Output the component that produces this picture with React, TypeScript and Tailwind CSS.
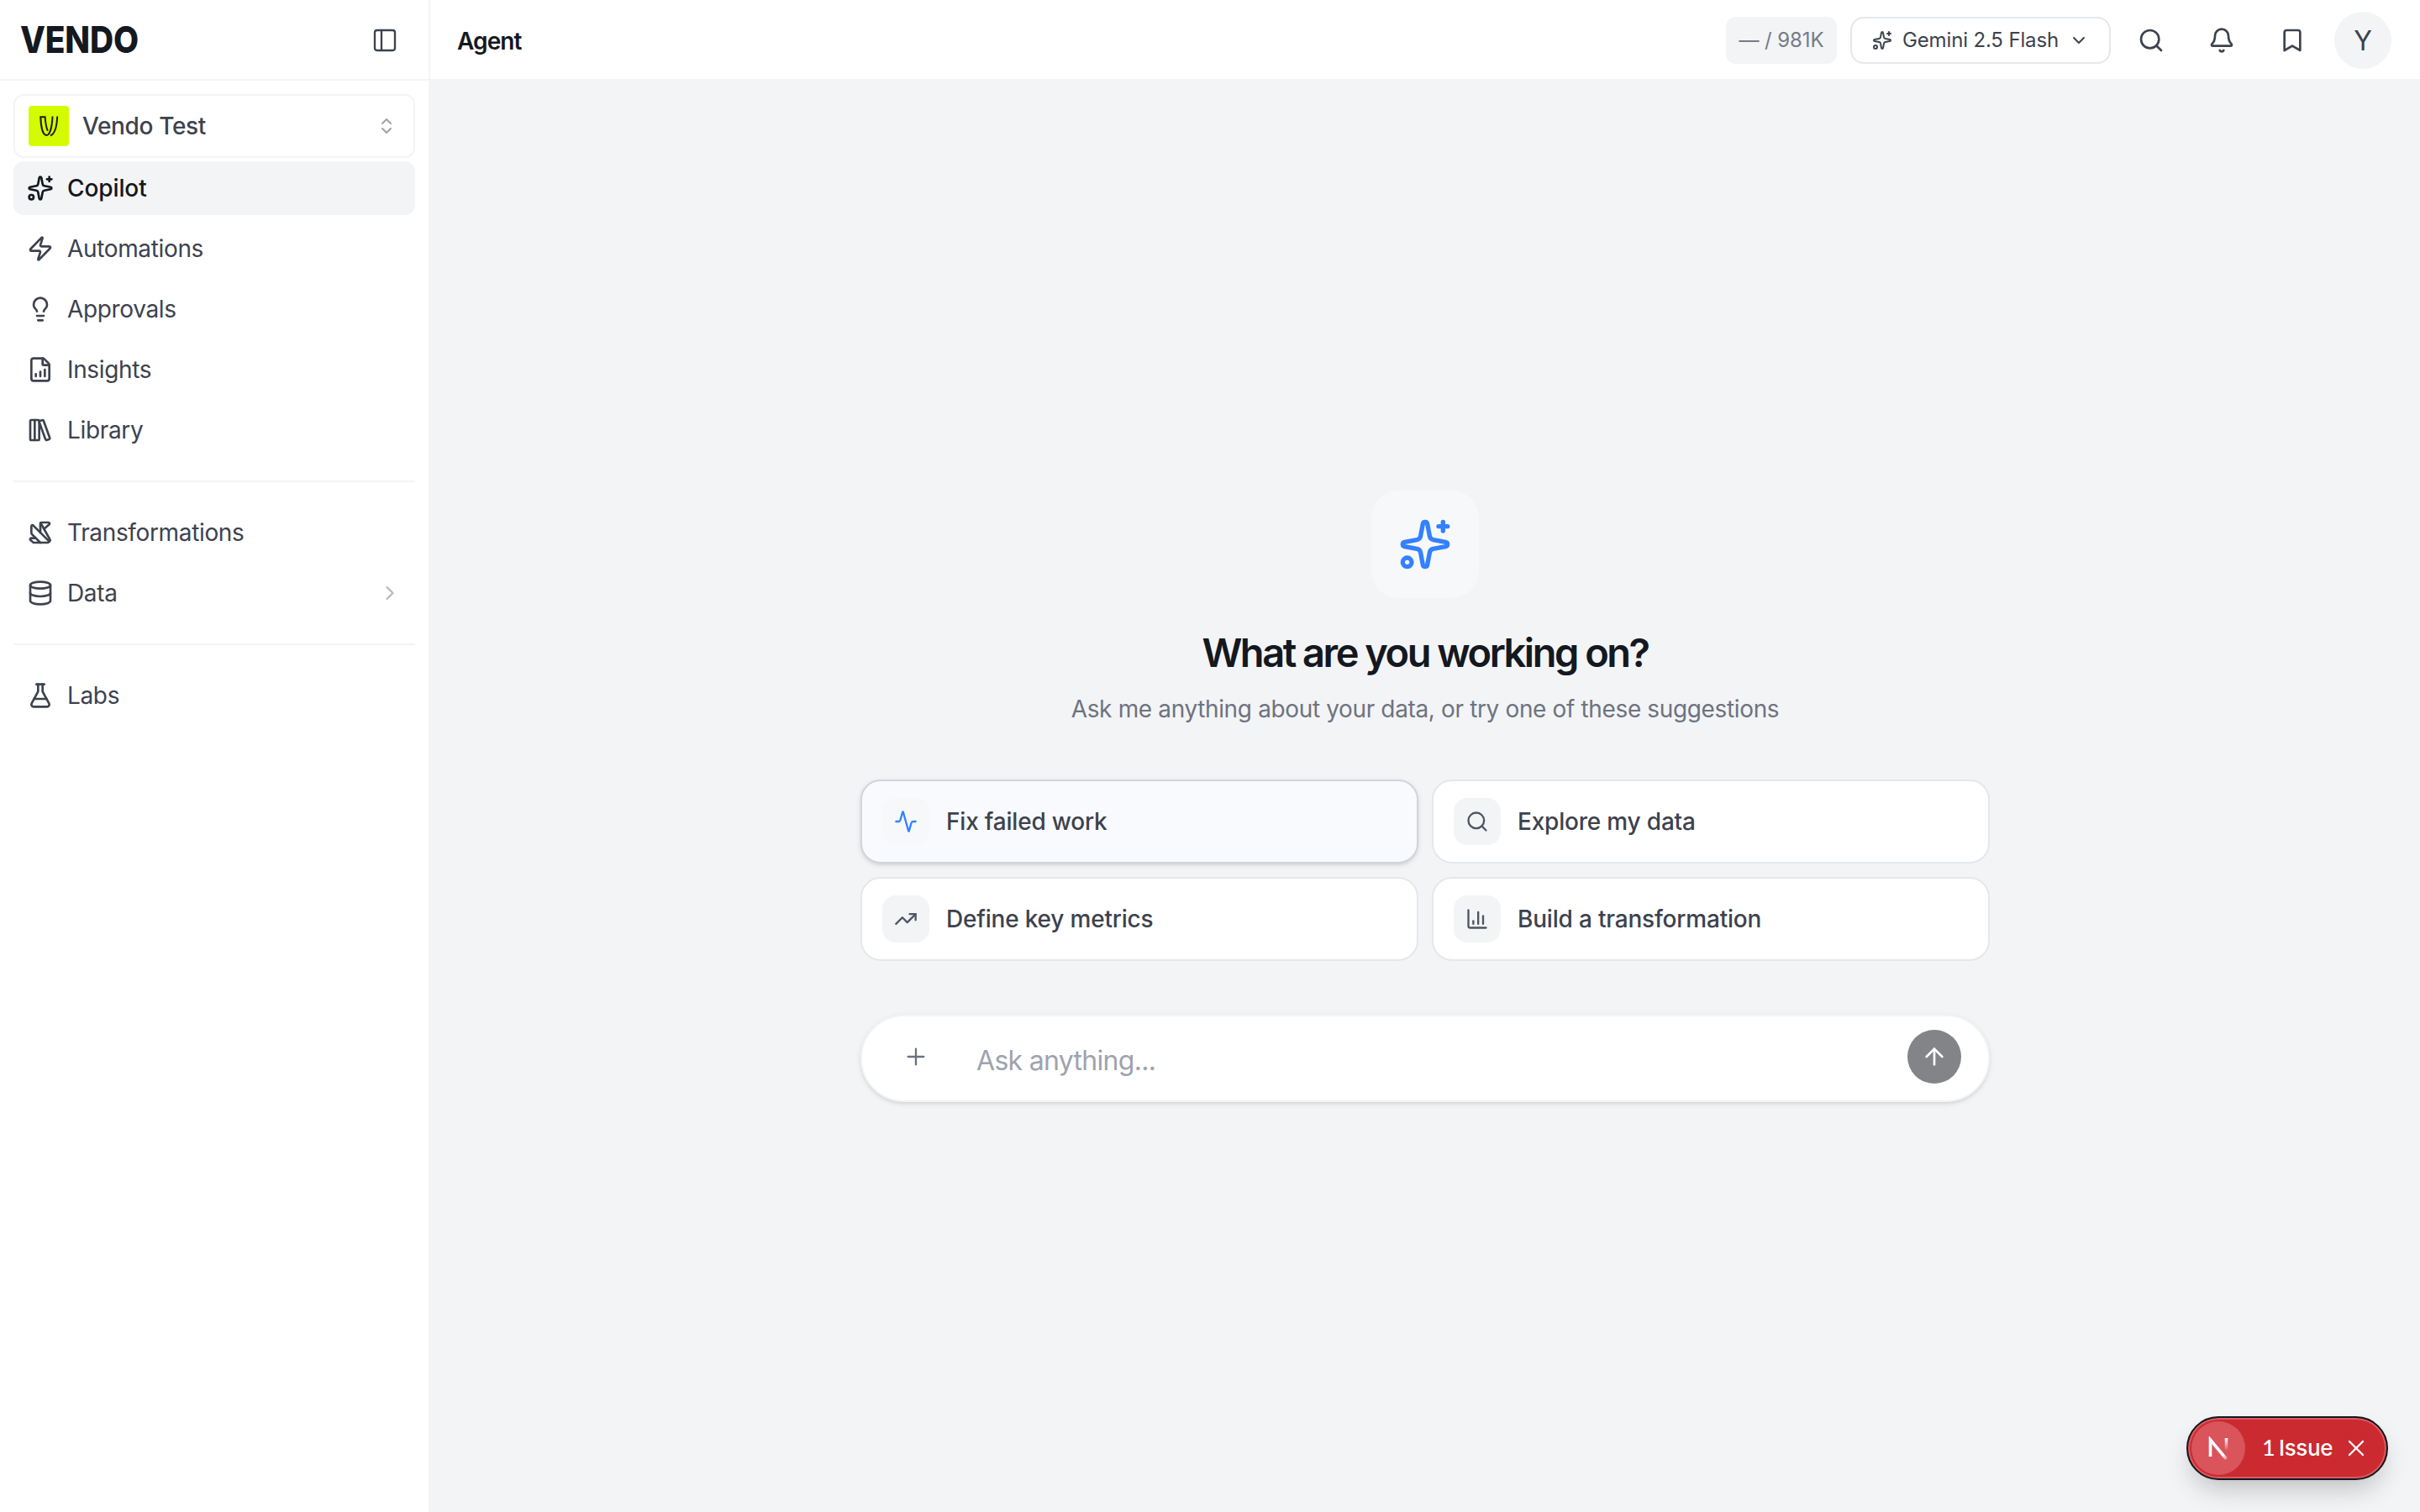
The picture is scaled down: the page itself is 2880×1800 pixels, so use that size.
import {
  Activity,
  ArrowUp,
  Bell,
  Bookmark,
  ChartColumn,
  ChevronDown,
  ChevronRight,
  ChevronsUpDown,
  Database,
  FileChartColumnIncreasing,
  FlaskConical,
  LibraryBig,
  Lightbulb,
  Origami,
  PanelLeft,
  Plus,
  Search,
  Sparkles,
  TrendingUp,
  X,
  Zap,
  type LucideIcon,
} from "lucide-react";

interface NavItemProps {
  icon: LucideIcon;
  label: string;
  active?: boolean;
  expandable?: boolean;
}

function NavItem({ icon: Icon, label, active, expandable }: NavItemProps) {
  return (
    <a
      className={
        active
          ? "flex h-16 items-center gap-4 rounded-xl bg-[#f3f4f6] px-4 text-[28px] font-medium tracking-[-0.1px] text-[#141820]"
          : "flex h-16 items-center gap-4 rounded-xl px-4 text-[28px] tracking-[-0.35px] text-[#3d424e]"
      }
    >
      <Icon className="size-8 shrink-0" />
      <span className="flex-1">{label}</span>
      {expandable && <ChevronRight className="size-7 text-[#b7bac3]" />}
    </a>
  );
}

function Divider() {
  return <hr className="my-7 border-t-2 border-[#f3f4f6]" />;
}

/** Square workspace mark: a double-stroked V on lime. */
function WorkspaceMark() {
  return (
    <svg className="size-12 shrink-0 rounded bg-[#d5fb00]" viewBox="0 0 48 48" aria-hidden="true">
      <g fill="none" stroke="#1b2010" strokeWidth="2">
        <path d="M22.800 30C20.800 25 20 19 19.600 13.300H14.300C14.600 23 16.500 35 21.300 35C26 35 28 23 28.500 12.500" />
        <path d="M34.200 12.500C33.800 22 32 33 26 35.500" />
      </g>
    </svg>
  );
}

function Sidebar() {
  return (
    <aside className="flex w-[512px] shrink-0 flex-col border-r-2 border-[#f3f4f6] bg-white">
      <div className="flex h-24 items-center justify-between border-b-2 border-[#f3f4f6] pr-9 pl-6">
        <span className="origin-left scale-x-[0.885] text-[44px] font-extrabold tracking-[-0.2px] text-[#141820]">
          VENDO
        </span>
        <PanelLeft className="mt-0.5 size-8 text-[#3d424e]" strokeWidth={1.75} />
      </div>
      <nav className="flex flex-col px-4 pt-4">
        <button className="mb-1 flex h-[76px] items-center gap-4 rounded-xl border-2 border-[#f3f4f6] px-4 text-[28px] font-medium tracking-[-0.35px] text-[#3d424e]">
          <WorkspaceMark />
          <span className="flex-1 text-left">Vendo Test</span>
          <ChevronsUpDown className="mr-1 size-6 text-[#9ea2ad]" />
        </button>
        <div className="flex flex-col gap-2">
          <NavItem icon={Sparkles} label="Copilot" active />
          <NavItem icon={Zap} label="Automations" />
          <NavItem icon={Lightbulb} label="Approvals" />
          <NavItem icon={FileChartColumnIncreasing} label="Insights" />
          <NavItem icon={LibraryBig} label="Library" />
        </div>
        <Divider />
        <div className="flex flex-col gap-2">
          <NavItem icon={Origami} label="Transformations" />
          <NavItem icon={Database} label="Data" expandable />
        </div>
        <Divider />
        <NavItem icon={FlaskConical} label="Labs" />
      </nav>
    </aside>
  );
}

function Header() {
  return (
    <header className="flex h-24 items-center border-b-2 border-[#f3f4f6] bg-white pt-0.5 pr-[34px] pl-8 text-[#3d424e]">
      <h1 className="flex-1 pt-px text-[28px] font-semibold tracking-[-0.9px] text-[#141820]">Agent</h1>
      <span className="w-[132px] rounded-xl bg-[#f3f4f6] text-center text-2xl leading-[56px] tracking-[-0.1px] whitespace-nowrap text-[#757b88]">
        — / 981K
      </span>
      <button className="ml-4 flex h-14 w-[310px] items-center gap-3 rounded-2xl border-2 border-[#e5e7eb] px-6 text-2xl tracking-[-0.15px]">
        <Sparkles className="size-6 shrink-0" />
        <span className="flex-1 text-left whitespace-nowrap">Gemini 2.5 Flash</span>
        <ChevronDown className="size-6 shrink-0" />
      </button>
      <Search className="ml-8 size-8" />
      <Bell className="ml-[52px] size-8" />
      <Bookmark className="ml-[52px] size-8" />
      <span className="ml-[34px] flex size-[68px] items-center justify-center rounded-full bg-[#f3f4f6] pt-0.5 text-[32px]">
        Y
      </span>
    </header>
  );
}

interface SuggestionProps {
  icon: LucideIcon;
  label: string;
  highlighted?: boolean;
}

function Suggestion({ icon: Icon, label, highlighted }: SuggestionProps) {
  return (
    <button
      className={
        highlighted
          ? "flex h-[100px] items-center gap-5 rounded-3xl border-2 border-[#d1d5db] bg-[#f8fafd] px-6 shadow-[0_2px_6px_rgba(0,0,0,0.1),0_2px_4px_-2px_rgba(0,0,0,0.1)]"
          : "flex h-[100px] items-center gap-5 rounded-3xl border-2 border-[#e5e7eb] bg-white px-6"
      }
    >
      <span
        className={
          highlighted
            ? "flex size-14 items-center justify-center rounded-2xl bg-[#f7f8fa] text-[#3381ff]"
            : "flex size-14 items-center justify-center rounded-2xl bg-[#f3f4f6] text-[#4f5562]"
        }
      >
        <Icon className="size-7" />
      </span>
      <span className="text-[28px] font-medium tracking-[-0.2px] text-[#3d424e]">{label}</span>
    </button>
  );
}

function Composer() {
  return (
    <div className="mt-16 flex h-[104px] w-full items-center rounded-full border-2 border-[#f3f4f6] bg-white px-8 shadow-[0_2px_6px_rgba(0,0,0,0.1),0_2px_4px_-2px_rgba(0,0,0,0.1)]">
      <Plus className="mx-4 mb-1 size-8 text-[#6b7180]" strokeWidth={1.75} />
      <span className="flex-1 pt-1.5 pl-10 text-[32px] tracking-[-0.7px] text-[#9ea3ae]">Ask anything...</span>
      <span className="mb-1 flex size-16 items-center justify-center rounded-full bg-[#838488] text-white">
        <ArrowUp className="size-8" />
      </span>
    </div>
  );
}

/** Dev overlay pill in the bottom right corner. */
function IssueBadge() {
  return (
    <div className="absolute right-[38px] bottom-[38px] flex h-[76px] w-[240px] items-center rounded-full border-2 border-[#141820] bg-[#ca2a30] p-1 text-[26px] font-medium text-white shadow-[inset_0_0_0_2px_#dc5a60,0_16px_32px_-8px_rgba(0,0,0,0.24)]">
      <span className="flex size-16 shrink-0 items-center justify-center rounded-full bg-[#d9545b]">
        <svg className="size-7" viewBox="0 0 28 28" fill="none" aria-hidden="true">
          <defs>
            <linearGradient id="diag" x1="14" y1="14" x2="24" y2="27" gradientUnits="userSpaceOnUse">
              <stop offset="0.600" stopColor="#fff" />
              <stop offset="1" stopColor="#fff" stopOpacity="0.300" />
            </linearGradient>
            <linearGradient id="stem" x1="0" y1="2" x2="0" y2="17" gradientUnits="userSpaceOnUse">
              <stop stopColor="#fff" />
              <stop offset="1" stopColor="#fff" stopOpacity="0" />
            </linearGradient>
          </defs>
          <path d="M4.500 24V4L23.500 27" stroke="url(#diag)" strokeWidth="3.600" />
          <path d="M23.500 2V17" stroke="url(#stem)" strokeWidth="3.600" />
        </svg>
      </span>
      <span className="mb-0.5 ml-5 w-[82px] tracking-[-0.35px] whitespace-nowrap">
        <span className="mr-[-2px] font-['Lato'] text-[27px]">1</span> Issue
      </span>
      <X className="ml-3.5 size-8" strokeWidth={1.75} />
    </div>
  );
}

export default function App() {
  return (
    <div className="relative flex h-[1800px] w-[2880px] overflow-hidden bg-[#f3f4f6] font-['Inter',sans-serif]">
      <Sidebar />
      <div className="flex flex-1 flex-col">
        <Header />
        <main className="mx-auto flex w-[1344px] flex-col items-center pt-[488px]">
          <div className="flex size-32 items-center justify-center rounded-[32px] bg-[#f7f8fa]">
            <Sparkles className="size-16 text-[#3381ff]" />
          </div>
          <h2 className="mt-[33px] text-[47px] leading-[64px] font-semibold tracking-[-2.5px] text-[#141820]">
            What are you working on?
          </h2>
          <p className="mt-[15px] text-[28px] leading-10 tracking-[-0.36px] text-[#6d7380]">
            Ask me anything about your data, or try one of these suggestions
          </p>
          <div className="mt-16 grid w-full grid-cols-2 gap-4">
            <Suggestion icon={Activity} label="Fix failed work" highlighted />
            <Suggestion icon={Search} label="Explore my data" />
            <Suggestion icon={TrendingUp} label="Define key metrics" />
            <Suggestion icon={ChartColumn} label="Build a transformation" />
          </div>
          <Composer />
        </main>
      </div>
      <IssueBadge />
    </div>
  );
}
